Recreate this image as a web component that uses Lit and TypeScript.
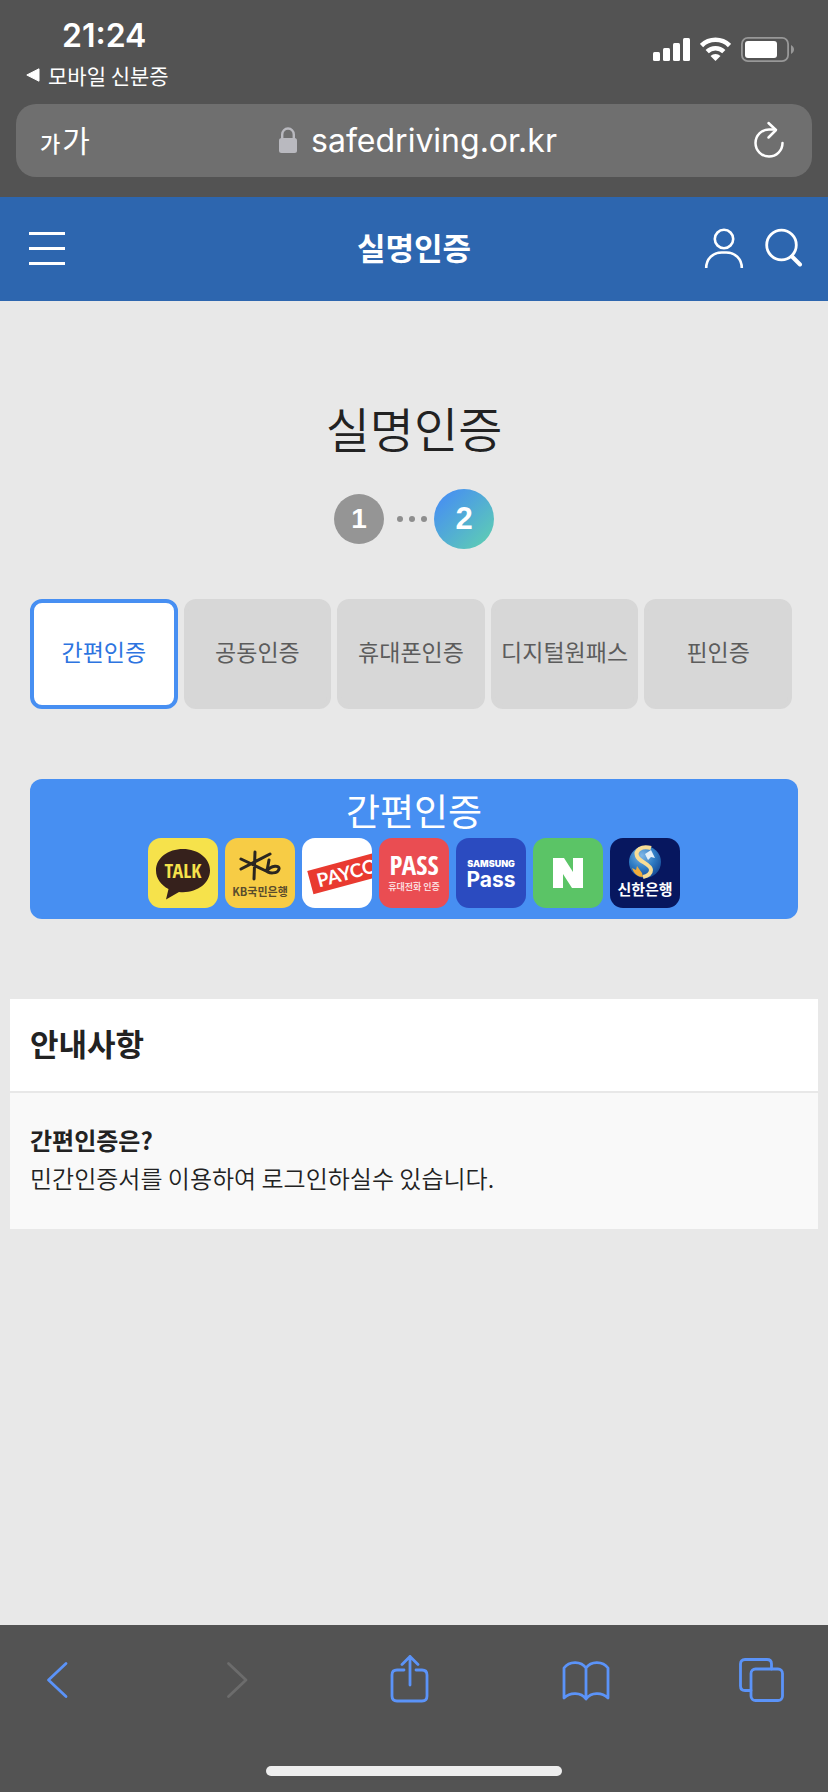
import { LitElement, html, css, svg } from "lit";
import { customElement, state } from "lit/decorators.js";
import { classMap } from "lit/directives/class-map.js";

const logos = [
  {
    name: "카카오톡",
    art: svg`<rect width="70" height="70" rx="13" fill="#f6e24b"/>
      <path d="M35 11C20 11 8 20 8 32.500c0 8 5 14.500 12.500 18.500L18 61.500 31 54c1.300.2 2.700.2 4 .2 15 0 27-9.500 27-21.700S50 11 35 11z" fill="#36211c"/>
      <text x="35" y="40" text-anchor="middle" font-size="20" font-weight="700" fill="#f6e24b" font-family="Open Sans Condensed, Roboto Condensed, Liberation Sans Narrow, Roboto, sans-serif">TALK</text>`,
  },
  {
    name: "KB국민은행",
    art: svg`<rect width="70" height="70" rx="13" fill="#f7cc45"/>
      <g fill="none" stroke="#2b2620" stroke-width="3" stroke-linecap="round">
        <path d="M30 14L29 41M16 21L41 33M45 16L16 31M44 22L42 33C46 27 55 27 54 31C53 36 43 36 41 32"/>
      </g>
      <text x="35" y="58" text-anchor="middle" font-size="11" font-weight="700" fill="#5a4c2c" font-family="Noto Sans CJK KR, sans-serif">KB국민은행</text>`,
  },
  {
    name: "페이코",
    art: svg`<defs><clipPath id="tile"><rect width="70" height="70" rx="13"/></clipPath></defs>
      <g clip-path="url(#tile)"><rect width="70" height="70" fill="#fff"/>
        <g transform="rotate(-15 5 32)">
          <rect x="5" y="33" width="76" height="24" fill="#e93a30"/>
          <text x="12" y="52" font-size="19" font-weight="700" fill="#fff" font-family="Lato, sans-serif">PAYCO</text>
        </g></g>`,
  },
  {
    name: "PASS",
    art: svg`<rect width="70" height="70" rx="13" fill="#ea4d52"/>
      <text x="35" y="37" text-anchor="middle" font-size="27" font-weight="700" fill="#fff" font-family="Open Sans Condensed, Roboto Condensed, Liberation Sans Narrow, Roboto, sans-serif">PASS</text>
      <text x="35" y="52" text-anchor="middle" font-size="9" font-weight="700" fill="#fbd9da" font-family="Noto Sans CJK KR, sans-serif">휴대전화 인증</text>`,
  },
  {
    name: "삼성패스",
    art: svg`<rect width="70" height="70" rx="13" fill="#2b4bc0"/>
      <text x="35" y="29" text-anchor="middle" font-size="9" font-weight="900" fill="#fff" font-family="Inter, sans-serif">SAMSUNG</text>
      <text x="35" y="49" text-anchor="middle" font-size="21" font-weight="700" fill="#fff" font-family="Inter, sans-serif">Pass</text>`,
  },
  {
    name: "네이버",
    art: svg`<rect width="70" height="70" rx="13" fill="#5bc466"/>
      <path d="M20 20h11l9 14V20h10v30H39L30 36v14H20z" fill="#fff"/>`,
  },
  {
    name: "신한은행",
    art: svg`<defs><radialGradient id="globe" cx=".4" cy=".3" r=".8"><stop offset="0" stop-color="#7fb7e6"/><stop offset=".5" stop-color="#2f7cc4"/><stop offset="1" stop-color="#103f8c"/></radialGradient></defs>
      <rect width="70" height="70" rx="13" fill="#07175f"/>
      <circle cx="35" cy="24" r="16" fill="url(#globe)"/>
      <path d="M41 10C31 7 25 13 27 18c2 6 14 8 14 14 0 4-4 6-8 7" fill="none" stroke="#f8dd96" stroke-width="4"/>
      <path d="M33 39c-5 0-9-3-11-9l4 2 1-4 5 7z" fill="#f2ac3b"/>
      <path d="M35 16l6-4 4 8-4-1-3 3z" fill="#e3f0f8"/>
      <text x="35" y="57" text-anchor="middle" font-size="15" font-weight="700" fill="#fff" font-family="Noto Sans CJK KR, sans-serif">신한은행</text>`,
  },
];

@customElement("status-area")
export class StatusArea extends LitElement {
  static styles = css`
    :host { display: block; background: #535353; color: #fff; padding: 0 16px 20px; font-family: Inter, 'Noto Sans CJK KR', sans-serif; }
    .status { display: flex; justify-content: space-between; height: 104px; padding: 0 18px 0 10px; box-sizing: border-box; }
    .left { display: flex; flex-direction: column; padding-top: 16px; }
    .time { font-size: 32px; line-height: 40px; font-weight: 600; padding-left: 36px; }
    .back { display: flex; align-items: center; gap: 8px; color: #fff; text-decoration: none; font: 21px/38px 'Noto Sans CJK KR', sans-serif; }
    .right { display: flex; gap: 10px; padding-top: 37px; height: 26px; }
    .address { display: grid; grid-template-columns: 1fr auto 1fr; align-items: center; height: 73px; border-radius: 20px; background: #6f6f6f; padding: 0 26px 0 24px; }
    button { border: 0; background: none; padding: 0; color: inherit; }
    .text-size { justify-self: start; display: flex; align-items: baseline; gap: 2px; font-family: 'Noto Sans CJK KR', sans-serif; line-height: 40px; }
    .small { font-size: 22px; font-weight: 500; }
    .large { font-size: 30px; }
    .url { display: flex; align-items: center; gap: 14px; padding-left: 10px; font-size: 32px; line-height: 40px; }
    .reload { justify-self: end; }
    svg { display: block; }
  `;
  render() {
    return html`
      <div class="status">
        <div class="left">
          <span class="time">21:24</span>
          <a class="back" href="#"><svg width="14" height="14" viewBox="0 0 14 14"><path d="M13 .8v12.400L.8 7z" fill="#fff" stroke="#fff" stroke-linejoin="round"/></svg>모바일 신분증</a>
        </div>
        <div class="right">
          <svg width="37" height="25" viewBox="0 0 37 25" fill="#fff"><rect y="15" width="7" height="9" rx="1.500"/><rect x="10" y="11" width="7" height="13" rx="1.500"/><rect x="20" y="6" width="7" height="18" rx="1.500"/><rect x="30" y="1" width="7" height="23" rx="1.500"/></svg>
          <svg width="31" height="25" viewBox="0 0 31 25"><g fill="none" stroke="#fff" stroke-width="4.600"><path d="M1.500 8.500a20 20 0 0 1 28 0"/><path d="M7.200 14.600a12 12 0 0 1 16.600 0"/></g><path d="M15.500 24l-5-5a7.200 7.200 0 0 1 10 0z" fill="#fff"/></svg>
          <svg width="53" height="25" viewBox="0 0 53 25"><rect x=".9" y=".9" width="46.200" height="23.200" rx="6" fill="none" stroke="#989898" stroke-width="1.800"/><rect x="4" y="4" width="32" height="17" rx="3" fill="#fff"/><path d="M50 8c4 2 4 7 0 9z" fill="#989898"/></svg>
        </div>
      </div>
      <div class="address">
        <button class="text-size" aria-label="글자 크기"><span class="small">가</span><span class="large">가</span></button>
        <div class="url">
          <svg width="18" height="27" viewBox="0 0 18 27"><rect y="11" width="18" height="15" rx="2.500" fill="#b9b9bf"/><path d="M3.200 12V7.500a5.800 6 0 0 1 11.600 0V12" fill="none" stroke="#b9b9bf" stroke-width="2.400"/></svg>
          <span>safedriving.or.kr</span>
        </div>
        <button class="reload" aria-label="새로고침"><svg width="34" height="40" viewBox="0 0 34 40" fill="none" stroke="#fff" stroke-width="2.500" stroke-linecap="round" stroke-linejoin="round"><path d="M30.500 22a13.500 13.500 0 1 1-13.500-13.500h6"/><path d="M16.500 2l7.500 7-7.500 7.500"/></svg></button>
      </div>`;
  }
}

@customElement("site-header")
export class SiteHeader extends LitElement {
  static styles = css`
    :host { display: grid; grid-template-columns: 1fr auto 1fr; align-items: center; height: 104px; padding: 0 24px; background: #2d66af; color: #fff; font-family: 'Noto Sans CJK KR', sans-serif; }
    h1 { margin: 0; padding-bottom: 4px; font-size: 31px; line-height: 48px; font-weight: 700; }
    button { border: 0; background: none; padding: 0; color: inherit; }
    .menu { justify-self: start; padding: 0 5px 2px; }
    .tools { justify-self: end; display: flex; gap: 20px; padding-bottom: 2px; }
    svg { display: block; }
  `;
  render() {
    return html`
      <button class="menu" aria-label="메뉴"><svg width="36" height="33" viewBox="0 0 36 33" fill="#fff"><path d="M0 0h36v3H0zM0 15h36v3H0zM0 30h36v3H0z"/></svg></button>
      <h1>실명인증</h1>
      <div class="tools">
        <button aria-label="내 정보"><svg width="40" height="40" viewBox="0 0 40 40" fill="none" stroke="#fff" stroke-width="2.600"><circle cx="20" cy="11" r="9.200"/><path d="M2.200 40c0-9 6.500-15.500 15.500-15.500h4.600c9 0 15.500 6.500 15.500 15.500"/></svg></button>
        <button aria-label="검색"><svg width="40" height="40" viewBox="0 0 40 40" fill="none" stroke="#fff" stroke-width="2.800" stroke-linecap="round"><circle cx="17.500" cy="17" r="14.800"/><path d="M28 28.500l8 8" stroke-width="4"/></svg></button>
      </div>`;
  }
}

@customElement("browser-toolbar")
export class BrowserToolbar extends LitElement {
  static styles = css`
    :host { display: block; background: #535353; padding: 30px 0 16px; }
    .row { display: flex; justify-content: space-between; padding: 0 42px 0 33px; }
    button { border: 0; background: none; padding: 0; color: #5b93f8; }
    button:disabled { color: #6c6c6c; }
    .home { width: 296px; height: 10px; margin: 63px auto 0; border-radius: 5px; background: #eee; }
    svg { display: block; fill: none; stroke: currentColor; stroke-width: 2.8; stroke-linecap: round; stroke-linejoin: round; }
  `;
  render() {
    return html`
      <div class="row">
        <button aria-label="뒤로"><svg width="48" height="48" viewBox="0 0 48 48"><path d="M33 8.500L15.500 25 33 41.500"/></svg></button>
        <button aria-label="앞으로" disabled><svg width="48" height="48" viewBox="0 0 48 48"><path d="M19.500 8.500L37 25 19.500 41.500"/></svg></button>
        <button aria-label="공유"><svg width="48" height="48" viewBox="0 0 48 48"><path d="M18 15h-7q-5 0-5 5v21q0 5 5 5h25q5 0 5-5V20q0-5-5-5h-6M24 30V1.500M16 9.500l8-8 8 8"/></svg></button>
        <button aria-label="책갈피"><svg width="48" height="48" viewBox="0 0 48 48"><path d="M24 13C19 5.500 7 6 2 13v30c6-6 17-6 22 1 5-7 16-7 22-1V13c-5-7-17-7.500-22 0zV43"/></svg></button>
        <button aria-label="탭"><svg width="48" height="48" viewBox="0 0 48 48"><rect x="13" y="14" width="31.500" height="31.500" rx="4.500"/><path d="M33.500 14V9q0-4.500-4.500-4.500H7Q2.500 4.500 2.500 9v22q0 4.500 4.500 4.500h6"/></svg></button>
      </div>
      <div class="home"></div>`;
  }
}

@customElement("app-root")
export class AppRoot extends LitElement {
  @state() private selected = 0;
  private tabs = ["간편인증", "공동인증", "휴대폰인증", "디지털원패스", "핀인증"];

  static styles = css`
    :host { display: flex; flex-direction: column; min-height: 100vh; background: #e8e8e8; color: #222; font-family: 'Noto Sans CJK KR', sans-serif; }
    main { flex: 1; padding: 96px 10px 40px; }
    .inset { margin-left: 20px; margin-right: 20px; }
    h2, h3, h4, p, ol { margin: 0; padding: 0; }
    .title { text-align: center; font-size: 48px; line-height: 60px; font-weight: 350; }
    .steps { display: flex; justify-content: center; align-items: center; list-style: none; margin-top: 32px; font-family: 'Liberation Sans', sans-serif; font-weight: 700; color: #fff; }
    .step { display: grid; place-items: center; width: 50px; height: 50px; border-radius: 50%; background: #959595; font-size: 28px; line-height: 32px; }
    .current { width: 60px; height: 60px; background: linear-gradient(135deg, #478ff2 10%, #5dcbb6 90%); font-size: 31px; }
    .dots { display: flex; gap: 6px; padding: 0 7px 0 13px; }
    .dot { width: 6px; height: 6px; border-radius: 50%; background: #8e8e8e; }
    .tabs { display: grid; grid-template-columns: repeat(5, 1fr); gap: 6px; margin-top: 50px; padding-right: 6px; }
    .tab { height: 110px; border: 4px solid #d7d7d7; border-radius: 12px; background: #d7d7d7; color: #5c5c5c; font: 23px/32px 'Noto Sans CJK KR', sans-serif; padding: 0 0 6px; white-space: nowrap; }
    .tab.selected { border-color: #478ff2; background: #fff; color: #2d74e0; }
    .banner { display: flex; flex-direction: column; align-items: center; width: calc(100% - 40px); margin-top: 70px; padding: 6px 0 11px; border: 0; border-radius: 12px; background: #478ff2; color: #fff; font: 37px/51px 'Noto Sans CJK KR', sans-serif; }
    .logos { display: flex; gap: 7px; padding-top: 2px; }
    .logos svg { display: block; }
    .notice { margin-top: 80px; background: #f9f9f9; }
    .notice-head { padding: 20px 20px 24px; border-bottom: 2px solid #e8e8e8; background: #fff; font-size: 31px; line-height: 48px; font-weight: 700; }
    .notice-body { padding: 28px 20px 32px; font-size: 24px; line-height: 38px; font-weight: 350; }
    .notice-body h4 { font-size: 24px; font-weight: 700; }
  `;

  render() {
    return html`
      <status-area></status-area>
      <site-header></site-header>
      <main>
        <h2 class="title">실명인증</h2>
        <ol class="steps">
          <li class="step">1</li>
          <li class="dots" aria-hidden="true"><span class="dot"></span><span class="dot"></span><span class="dot"></span></li>
          <li class="step current" aria-current="step">2</li>
        </ol>
        <div class="tabs inset" role="tablist">
          ${this.tabs.map(
            (label, i) => html`<button role="tab" aria-selected=${i === this.selected} class=${classMap({ tab: true, selected: i === this.selected })} @click=${() => (this.selected = i)}>${label}</button>`
          )}
        </div>
        <button class="banner inset">
          <span>간편인증</span>
          <span class="logos">
            ${logos.map((l) => html`<svg width="70" height="70" viewBox="0 0 70 70" role="img" aria-label=${l.name}>${l.art}</svg>`)}
          </span>
        </button>
        <section class="notice">
          <h3 class="notice-head">안내사항</h3>
          <div class="notice-body">
            <h4>간편인증은?</h4>
            <p>민간인증서를 이용하여 로그인하실수 있습니다.</p>
          </div>
        </section>
      </main>
      <browser-toolbar></browser-toolbar>`;
  }
}
